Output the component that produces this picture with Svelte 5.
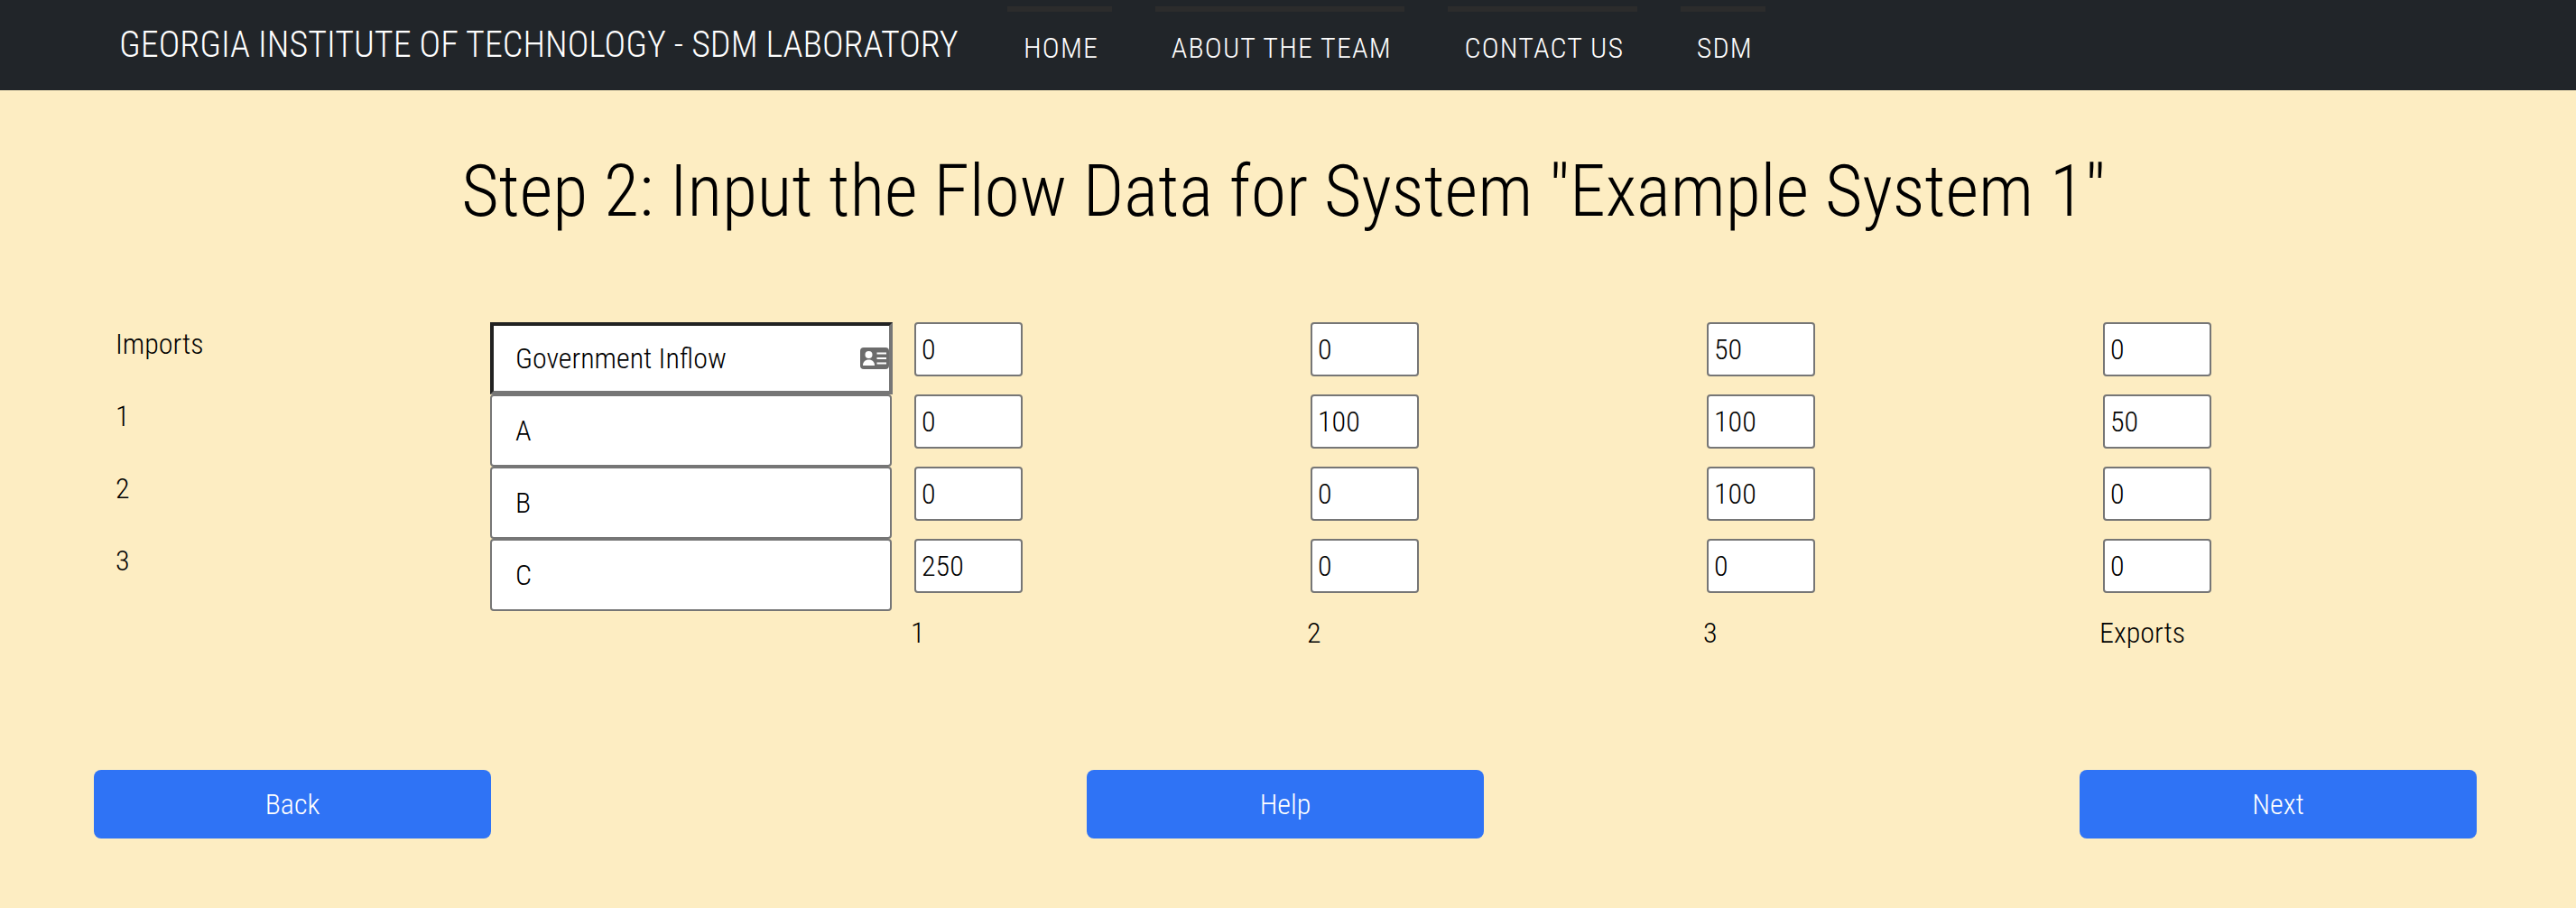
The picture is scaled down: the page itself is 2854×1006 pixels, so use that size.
<script>
  const nav = ['HOME', 'ABOUT THE TEAM', 'CONTACT US', 'SDM'];
  const rows = [
    { label: 'Imports', name: 'Government Inflow', values: [0, 0, 50, 0], focus: true },
    { label: '1', name: 'A', values: [0, 100, 100, 50] },
    { label: '2', name: 'B', values: [0, 0, 100, 0] },
    { label: '3', name: 'C', values: [250, 0, 0, 0] }
  ];
  const footer = ['1', '2', '3', 'Exports'];
</script>

<header class="navbar">
  <span class="brand">GEORGIA INSTITUTE OF TECHNOLOGY - SDM LABORATORY</span>
  <nav class="links">
    {#each nav as item}
      <a class="link" href="#top">{item}</a>
    {/each}
  </nav>
</header>

<main>
  <h1>Step 2: Input the Flow Data for System "Example System 1"</h1>

  <section class="table">
    {#each rows as row}
      <div class="label">{row.label}</div>
      <div class="name-cell">
        <input class="name" class:focus={row.focus} value={row.name} />
        {#if row.focus}
          <svg class="card" viewBox="0 0 32 24" aria-hidden="true">
            <rect x="0" y="0" width="32" height="24" rx="4" fill="#6c6c6c" />
            <circle cx="9.5" cy="8" r="4" fill="#fff" />
            <path d="M3 20c0-4 2.5-6.5 6.5-6.5S16 16 16 20z" fill="#fff" />
            <path d="M18.5 6.5H29M18.5 12H29M18.5 17.5H29" stroke="#fff" stroke-width="2.2" />
          </svg>
        {/if}
      </div>
      {#each row.values as v}
        <div class="cell"><input class="num" value={v} /></div>
      {/each}
    {/each}
    <div></div>
    <div></div>
    {#each footer as f}
      <div class="foot">{f}</div>
    {/each}
  </section>

  <div class="actions">
    <button>Back</button>
    <button>Help</button>
    <button>Next</button>
  </div>
</main>

<style>
  :global(body) {
    margin: 0;
    background: #fdedc2;
    font-family: Roboto, "Liberation Sans", sans-serif;
    font-weight: 300;
    font-stretch: 75%;
    color: #000;
  }
  .navbar {
    height: 100px;
    background: #212529;
    display: flex;
    align-items: flex-start;
    padding-left: 132px;
    box-sizing: border-box;
  }
  .brand {
    color: #fff;
    font-size: 40px;
    line-height: 100px;
    width: 984px;
    white-space: nowrap;
  }
  .links {
    display: flex;
    gap: 48px;
    padding-top: 7px;
  }
  .link {
    color: #fff;
    text-decoration: none;
    font-size: 32px;
    letter-spacing: 1.2px;
    border-top: 6px solid #2c2c2c;
    padding: 20px 14.5px 0 18px;
    line-height: 40px;
  }
  main {
    padding: 0 110px 0 104px;
  }
  h1 {
    margin: 0;
    padding-top: 64px;
    text-align: center;
    font-size: 80px;
    font-weight: 300;
    line-height: 96px;
    height: 193px;
    padding-right: 4px;
    letter-spacing: -0.06px;
  }
  .table {
    display: grid;
    grid-template-columns: 439px 445px 439px 439px 439px 1fr;
    grid-auto-rows: 80px;
  }
  .label {
    font-size: 32px;
    line-height: 48px;
    padding: 0 0 0 24px;
  }
  .name-cell {
    position: relative;
  }
  .name, .num {
    font: inherit;
    font-family: inherit;
    box-sizing: border-box;
    background: #fff;
    border: 2px solid #767676;
    border-radius: 4px;
    color: #000;
    font-size: 32px;
    display: block;
  }
  .name {
    width: 445px;
    height: 80px;
    padding: 0 26px;
  }
  .name.focus {
    width: 446px;
    border-radius: 0;
    border: 4px solid #767676;
    border-top-color: #222;
    border-left-color: #222;
    padding: 0 24px;
  }
  .card {
    position: absolute;
    right: 3px;
    top: 28px;
    width: 32px;
    height: 24px;
  }
  .cell {
    padding-left: 25px;
  }
  .num {
    width: 120px;
    height: 60px;
    padding: 0 6px;
  }
  .foot {
    font-size: 32px;
    line-height: 48px;
    padding-left: 21px;
  }
  .actions {
    display: flex;
    justify-content: space-between;
    margin-top: 96px;
  }
  button {
    width: 440px;
    height: 76px;
    border: 0;
    border-radius: 8px;
    background: #2f73f5;
    color: #fff;
    font: inherit;
    font-size: 32px;
  }
</style>
